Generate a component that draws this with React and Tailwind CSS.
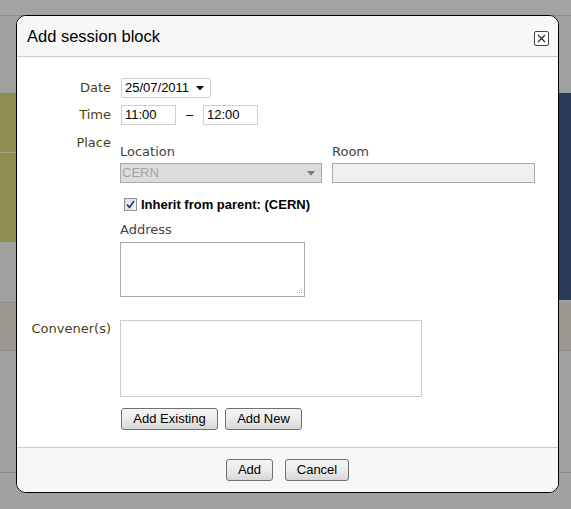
import React from "react";

const labelFont = { fontFamily: '"DejaVu Sans", Verdana, sans-serif' };

function Btn({ children, className = "" }) {
  return (
    <button
      className={
        "h-[22px] rounded-[3px] border border-[#707070] bg-gradient-to-b from-[#f4f4f4] via-[#ebebeb] to-[#d7d7d7] px-[9px] text-[13px] leading-[20px] text-black font-['Liberation_Sans',Arial,sans-serif] " +
        className
      }
    >
      {children}
    </button>
  );
}

export default function App() {
  return (
    <div className="relative h-[509px] w-[571px] overflow-hidden bg-[#a2a2a2]">
      {/* background page */}
      <div className="flex h-full flex-col">
        <div className="h-[15px] bg-[#a3a3a3]" />
        <div className="h-px bg-[#8e8e8e]" />
        <div className="h-[77px] bg-[#a0a0a0]" />
        <div className="flex h-[210px]">
          <div className="flex w-1/2 flex-col">
            <div className="h-[59px] bg-[#8e8d4d]" />
            <div className="h-px bg-[#a0a0a0]" />
            <div className="h-[89px] bg-[#8e8d4d]" />
            <div className="h-[60px] bg-[#a0a0a0]" />
            <div className="h-px bg-[#8c8c8c]" />
          </div>
          <div className="flex w-1/2 flex-col">
            <div className="h-[207px] bg-[#2a3a5a]" />
            <div className="h-[3px] bg-[#a0a0a0]" />
          </div>
        </div>
        <div className="h-[47px] bg-[#9b9891]" />
        <div className="h-px bg-[#8c8c8c]" />
        <div className="h-[121px] bg-[#a0a0a0]" />
        <div className="h-px bg-[#8c8c8c]" />
        <div className="flex-1 bg-[#a2a2a2]" />
      </div>

      {/* dialog */}
      <div className="absolute left-[16px] top-[15px] flex h-[478px] w-[543px] flex-col overflow-hidden rounded-[10px] border border-black bg-white">
        <div className="flex h-[41px] items-center justify-between border-b border-[#cccccc] bg-[#f7f7f7] pl-[10px] pr-[9px]">
          <span className="text-[16.5px] text-black font-['Liberation_Sans',Arial,sans-serif]">Add session block</span>
          <span className="mt-[4px] flex h-[15px] w-[15px] items-center justify-center rounded-[2px] border border-[#444] bg-white">
            <svg width="9" height="9" viewBox="0 0 9 9">
              <path d="M1 1 L8 8 M8 1 L1 8" stroke="#222" strokeWidth="1.1" />
            </svg>
          </span>
        </div>

        <div className="flex flex-1 flex-col pt-[21px]" style={labelFont}>
          {/* Date */}
          <div className="flex items-center">
            <div className="w-[94px] text-right text-[13px] text-[#4d3f10]">Date</div>
            <div className="ml-[10px] flex h-[20px] w-[90px] items-center justify-between rounded-[2px] border border-[#cfcfcf] bg-white pl-[3px] pr-[6px] text-[13px] text-black font-['Liberation_Sans',Arial,sans-serif]">
              <span>25/07/2011</span>
              <svg width="8" height="5" viewBox="0 0 8 5"><path d="M0 0 L8 0 L4 4.5 Z" fill="#111" /></svg>
            </div>
          </div>
          {/* Time */}
          <div className="mt-[7px] flex items-center">
            <div className="w-[94px] text-right text-[13px] text-[#4d3f10]">Time</div>
            <div className="ml-[10px] flex h-[20px] w-[55px] items-center border border-[#cfcfcf] pl-[3px] text-[13px] text-black font-['Liberation_Sans',Arial,sans-serif]">11:00</div>
            <div className="w-[27px] text-center text-[13px] text-black font-['Liberation_Sans',Arial,sans-serif]">–</div>
            <div className="flex h-[20px] w-[55px] items-center border border-[#cfcfcf] pl-[3px] text-[13px] text-black font-['Liberation_Sans',Arial,sans-serif]">12:00</div>
          </div>
          {/* Place */}
          <div className="mt-[10px] flex">
            <div className="w-[94px] text-right text-[13px] leading-[15px] text-[#4d3f10]">Place</div>
            <div className="ml-[9px] flex flex-col pt-[9px]">
              <div className="flex gap-[10px]">
                <div className="flex flex-col">
                  <div className="text-[13px] leading-[15px] text-[#444]">Location</div>
                  <div className="mt-[4px] flex h-[20px] w-[202px] items-center justify-between border border-[#a9a9a9] bg-[#dcdcdc] pl-[1px] pr-[6px] text-[13px] text-[#a4a4a4] font-['Liberation_Sans',Arial,sans-serif]">
                    <span>CERN</span>
                    <svg width="8" height="5" viewBox="0 0 8 5"><path d="M0 0 L8 0 L4 4.5 Z" fill="#777" /></svg>
                  </div>
                </div>
                <div className="flex flex-col">
                  <div className="text-[13px] leading-[15px] text-[#444]">Room</div>
                  <div className="mt-[4px] h-[20px] w-[203px] border border-[#a9a9a9] bg-[#efefef]" />
                </div>
              </div>
              <div className="mt-[14px] flex items-center pl-[4px]">
                <span className="flex h-[13px] w-[13px] items-center justify-center border border-[#8f8f9f] bg-gradient-to-br from-[#dcdce4] to-[#f6f6f8]">
                  <svg width="9" height="9" viewBox="0 0 9 9"><path d="M1 4.5 L3.5 7.5 L8 1" stroke="#21307a" strokeWidth="1.6" fill="none" /></svg>
                </span>
                <span className="ml-[4px] text-[13px] leading-[15px] font-bold text-black font-['Liberation_Sans',Arial,sans-serif]">Inherit from parent: (CERN)</span>
              </div>
              <div className="mt-[10px] text-[13px] leading-[15px] text-[#444]">Address</div>
              <div className="relative mt-[5px] h-[55px] w-[185px] border border-[#a9a9a9] bg-white">
                <svg className="absolute bottom-[1px] right-[1px]" width="8" height="8" viewBox="0 0 8 8">
                  <rect x="6" y="1" width="1" height="1" fill="#bbb" />
                  <rect x="4" y="3" width="1" height="1" fill="#bbb" />
                  <rect x="6" y="3" width="1" height="1" fill="#bbb" />
                  <rect x="2" y="5" width="1" height="1" fill="#bbb" />
                  <rect x="4" y="5" width="1" height="1" fill="#bbb" />
                  <rect x="6" y="5" width="1" height="1" fill="#bbb" />
                </svg>
              </div>
            </div>
          </div>
          {/* Conveners */}
          <div className="mt-[23px] flex">
            <div className="w-[94px] pt-[1px] text-right text-[13px] leading-[15px] text-[#4d3f10]">Convener(s)</div>
            <div className="ml-[9px] flex flex-col">
              <div className="h-[77px] w-[302px] border border-[#cccccc] bg-white" />
              <div className="mt-[11px] flex gap-[7px] pl-[1px]">
                <Btn className="w-[97px]">Add Existing</Btn>
                <Btn className="w-[77px]">Add New</Btn>
              </div>
            </div>
          </div>
        </div>

        <div className="flex h-[45px] items-start justify-center gap-[12px] border-t border-[#cccccc] bg-[#f7f7f7] pt-[11px]">
          <Btn className="w-[47px]">Add</Btn>
          <Btn className="w-[64px]">Cancel</Btn>
        </div>
      </div>
    </div>
  );
}
